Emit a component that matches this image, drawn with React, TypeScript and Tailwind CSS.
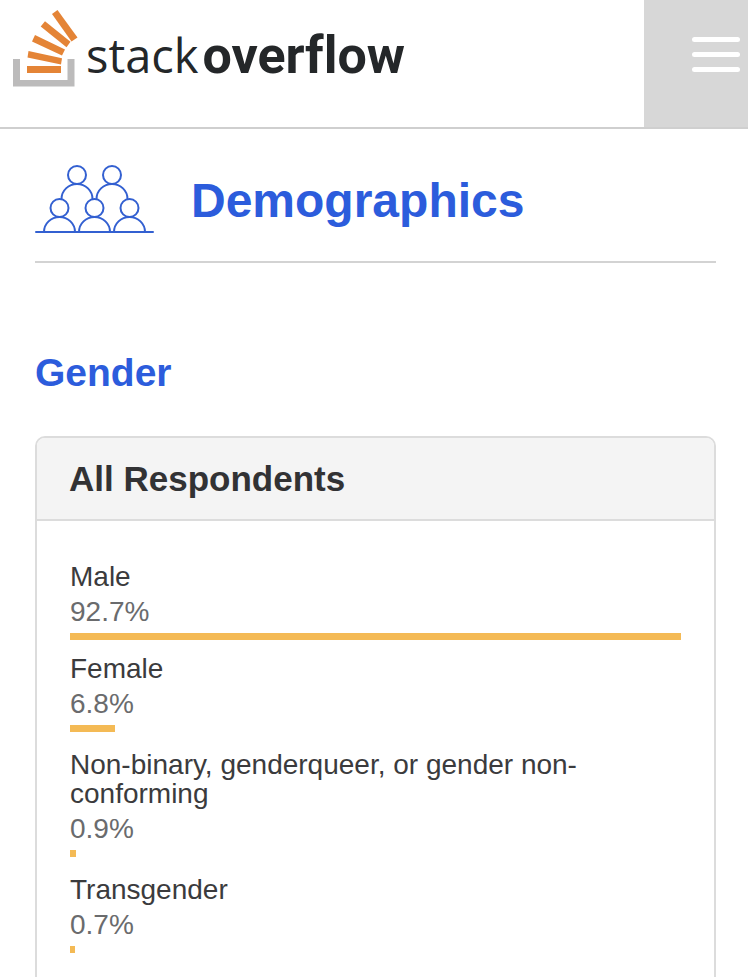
type Answer = { label: string; value: number };

const answers: Answer[] = [
  { label: 'Male', value: 92.7 },
  { label: 'Female', value: 6.8 },
  { label: 'Non-binary, genderqueer, or gender non-conforming', value: 0.9 },
  { label: 'Transgender', value: 0.7 },
];

const maxValue = Math.max(...answers.map((a) => a.value));

function LogoMark() {
  return (
    <svg width="66" height="78" viewBox="12 10 66 78" aria-hidden="true" className="shrink-0">
      <path d="M13 59h7v21h47.500V59h7v27.500H13z" fill="#bcbbbb" />
      <g fill="#e48436">
        <path d="M27 66h34v7H27z" />
        <path d="M28.500 51 62 58.300 61 64.500 27.500 57.500z" />
        <path d="M35 35 65 49.500 62 55.500 32 41.500z" />
        <path d="M45 21.300 70.500 41.700 66.500 47.200 40.700 26.500z" />
        <path d="M57.500 10 77.500 37.500 71.500 41.500 52 14z" />
      </g>
    </svg>
  );
}

function PeopleIcon() {
  return (
    <svg width="120" height="70" viewBox="35 164 120 70" fill="none" stroke="#3360d1" strokeWidth="2" strokeLinecap="round" aria-hidden="true" className="shrink-0">
      <circle cx="77" cy="175" r="9" />
      <circle cx="112" cy="175" r="9" />
      <path d="M61.500 199a15.500 15 0 0 1 31 0M96.500 199a15.500 15 0 0 1 31 0" />
      <circle cx="59.500" cy="208" r="9" />
      <circle cx="94.500" cy="208" r="9" />
      <circle cx="129.500" cy="208" r="9" />
      <path d="M44 232a15.500 15 0 0 1 31 0M79 232a15.500 15 0 0 1 31 0M114 232a15.500 15 0 0 1 31 0" />
      <path d="M36 232h117" />
    </svg>
  );
}

function SiteHeader() {
  return (
    <header className="flex h-[129px] items-stretch justify-between border-b-2 border-[#cfcfcf]">
      <a href="#" aria-label="stack overflow" className="flex items-start gap-2 pt-2.5 pl-3 text-[#242729]">
        <LogoMark />
        <span className="flex items-baseline gap-1 pt-2.5 leading-[70px] [font-variant-ligatures:none]">
          <span className="font-['Open_Sans',sans-serif] text-[47px] font-medium">stack</span>
          <span className="font-[Roboto,sans-serif] text-[52px] font-bold">overflow</span>
        </span>
      </a>
      <button type="button" aria-label="Menu" className="flex w-[104px] flex-col items-end gap-2.5 bg-[#d7d7d7] pt-[37px] pr-2">
        <span className="h-[5px] w-12 rounded-sm bg-white" />
        <span className="h-[5px] w-12 rounded-sm bg-white" />
        <span className="h-[5px] w-12 rounded-sm bg-white" />
      </button>
    </header>
  );
}

function AnswerRow({ label, value }: Answer) {
  return (
    <li className="mb-[18px] first:mb-[14px]">
      <div className="text-[#3b3b3d]">{label}</div>
      <div className="mt-1.5 text-[#6a6b6d]">{value}%</div>
      <div className="mt-[7px] h-[7px] bg-[#f4ba55]" style={{ width: `${(value / maxValue) * 100}%` }} />
    </li>
  );
}

export default function App() {
  return (
    <div className="h-screen overflow-hidden bg-white font-['Liberation_Sans',Arial,sans-serif]">
      <SiteHeader />
      <main className="pr-8 pl-[35px]">
        <div className="flex items-start gap-9 border-b-2 border-[#d3d3d3] pt-[35px] pb-[23px] text-[#2c5cdc]">
          <PeopleIcon />
          <h1 className="text-[48px] leading-[74px] font-bold">Demographics</h1>
        </div>
        <section className="pt-[86px]">
          <h2 className="text-[39px] leading-[48px] font-bold text-[#2c5cdc]">Gender</h2>
          <div className="mt-[39px] overflow-hidden rounded-[10px] border-2 border-[#dcdcdc]">
            <h3 className="border-b-2 border-[#dcdcdc] bg-[#f4f4f4] px-8 text-[35px] leading-[81px] font-bold text-[#323234]">
              All Respondents
            </h3>
            <ul className="px-[33px] pt-[41px] pb-8 text-[28px] leading-[29px]">
              {answers.map((a) => (
                <AnswerRow key={a.label} label={a.label} value={a.value} />
              ))}
            </ul>
          </div>
        </section>
      </main>
    </div>
  );
}
